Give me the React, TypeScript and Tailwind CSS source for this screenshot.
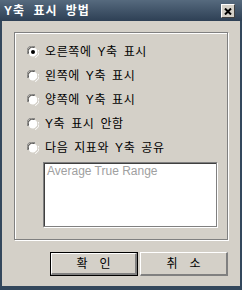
import React from 'react';

const font = { fontFamily: '"Liberation Sans", "Noto Sans CJK KR", sans-serif' };

const options = [
  '오른쪽에 Y축 표시',
  '왼쪽에 Y축 표시',
  '양쪽에 Y축 표시',
  'Y축 표시 안함',
  '다음 지표와 Y축 공유',
];

const Radio = ({ checked }: { checked: boolean }) => (
  <svg width="12" height="12" viewBox="0 0 12 12" className="shrink-0">
    <path d="M0.5 8 A5.5 5.5 0 0 1 8 0.5" fill="none" stroke="#808080" />
    <path d="M8 11.5 A5.5 5.5 0 0 0 11.5 4" fill="none" stroke="#ffffff" />
    <circle cx="6" cy="6" r="4.5" fill="#ffffff" />
    <path d="M1.5 7.5 A4.5 4.5 0 0 1 7.5 1.5" fill="none" stroke="#404040" />
    <path d="M7.5 10.5 A4.5 4.5 0 0 0 10.5 4.5" fill="none" stroke="#d4d0c8" />
    {checked && <circle cx="6" cy="6" r="2" fill="#000000" />}
  </svg>
);

const Button = ({ label, isDefault }: { label: string; isDefault?: boolean }) => (
  <button
    className={`w-[88px] h-[24px] bg-[#d4d0c8] text-[12px] font-normal text-black flex items-center justify-center ${
      isDefault ? 'border border-black' : ''
    }`}
  >
    <span className="w-full h-full flex items-center justify-center gap-[12px] border-t border-l border-t-white border-l-white border-r-2 border-b-2 border-r-[#808080] border-b-[#808080]">
      {label.split('').map((c, i) => (
        <span key={i}>{c}</span>
      ))}
    </span>
  </button>
);

export default function App() {
  return (
    <div className="w-[242px] h-[290px] bg-[#33475c] flex flex-col px-[2px] pb-[4px]" style={font}>
      {/* Title bar */}
      <div className="h-[21px] -mx-[2px] px-[4px] flex items-center justify-between bg-gradient-to-b from-[#566a7e] to-[#2e4055]">
        <span className="text-white font-bold text-[12px] tracking-[1px] [word-spacing:4px]">Y축 표시 방법</span>
        <div className="w-[14px] h-[14px] bg-[#d4d0c8] border-t border-l border-white border-r border-b border-r-[#404040] border-b-[#404040] flex items-center justify-center mr-[3px] mt-[1px]">
          <svg width="8" height="7" viewBox="0 0 8 7">
            <path d="M1 0.5 L7 6.5 M7 0.5 L1 6.5" stroke="#000" strokeWidth="2" />
          </svg>
        </div>
      </div>

      {/* Client area */}
      <div className="flex-1 bg-[#d4d0c8] pt-[11px] px-[12px]">
        <div className="h-[208px] border border-[#808080] shadow-[1px_1px_0_#ffffff,inset_1px_1px_0_#ffffff] pl-[12px] pt-[13px]">
          <div className="flex flex-col gap-[12px]">
            {options.map((o, i) => (
              <label key={o} className="flex items-center gap-[6px] h-[12px] text-[12px] text-black">
                <Radio checked={i === 0} />
                <span className="leading-none tracking-[0.6px] [word-spacing:2px]">{o}</span>
              </label>
            ))}
          </div>
          <div className="mt-[8px] ml-[16px] w-[174px] h-[65px] bg-white border border-[#808080] shadow-[inset_1px_1px_0_#404040,1px_1px_0_#ffffff] px-[3px] py-[1px] text-[12px] text-[#a0a0a0] leading-[14px]">
            Average True Range
          </div>
        </div>

        <div className="flex justify-end gap-[2px] mt-[12px]">
          <Button label="확인" isDefault />
          <Button label="취소" />
        </div>
      </div>
    </div>
  );
}
